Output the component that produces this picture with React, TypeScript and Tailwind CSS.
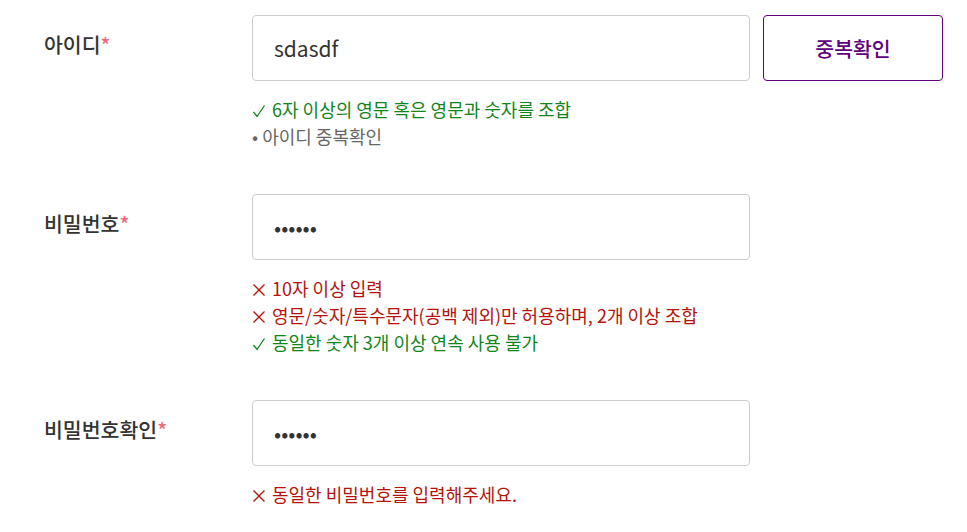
import type { JSX } from 'react'

type Hint = { ok: boolean | null; text: string }

const FONT = "font-['Noto_Sans_CJK_KR','Noto_Sans',sans-serif]"

function Cross(): JSX.Element {
  return (
    <svg width="14" height="14" viewBox="0 0 14 14" className="mr-[6px] inline-block align-[-1px]">
      <path d="M1.5 1.5 L12.5 12.5 M12.5 1.5 L1.5 12.5" stroke="currentColor" strokeWidth="1.3" fill="none" />
    </svg>
  )
}

function Check(): JSX.Element {
  return (
    <svg width="14" height="14" viewBox="0 0 14 14" className="mr-[6px] inline-block align-[-1px]">
      <path d="M1.5 8 L5 12.5 L12.5 1.5" stroke="currentColor" strokeWidth="1.3" fill="none" />
    </svg>
  )
}

function HintLine({ hint }: { hint: Hint }): JSX.Element {
  if (hint.ok === null) {
    return <p className="text-[#666]">• {hint.text}</p>
  }
  return (
    <p className={hint.ok ? 'text-[#0f851a]' : 'text-[#b3130b]'}>
      {hint.ok ? <Check /> : <Cross />}
      {hint.text}
    </p>
  )
}

function Row({
  label,
  value,
  type,
  hints,
  withButton,
}: {
  label: string
  value: string
  type: 'text' | 'password'
  hints: Hint[]
  withButton?: boolean
}): JSX.Element {
  return (
    <div className="flex">
      <label className="w-[208px] shrink-0 pt-[16px] text-[20.5px] leading-[26px] font-medium text-[#333]">
        {label}
        <span className="text-[#ee6a7b]">*</span>
      </label>
      <div className="flex flex-col">
        <div className="flex gap-[13px]">
          <input
            type={type}
            value={value}
            readOnly
            className="h-[66px] w-[498px] rounded-[4px] border border-[#ccc] bg-white px-[21px] text-[21px] text-[#333] outline-none"
          />
          {withButton && (
            <button className="h-[66px] w-[180px] rounded-[4px] border border-[#5f0080] bg-white text-[20.5px] font-medium text-[#5f0080]">
              중복확인
            </button>
          )}
        </div>
        <div className="mt-[15px] text-[18px] leading-[27px]">
          {hints.map((h) => (
            <HintLine key={h.text} hint={h} />
          ))}
        </div>
      </div>
    </div>
  )
}

export default function App(): JSX.Element {
  return (
    <div className={`${FONT} min-h-screen bg-white pl-[44px] pt-[15px]`}>
      <div className="flex flex-col gap-[44px]">
        <Row
          label="아이디"
          value="sdasdf"
          type="text"
          withButton
          hints={[
            { ok: true, text: '6자 이상의 영문 혹은 영문과 숫자를 조합' },
            { ok: null, text: '아이디 중복확인' },
          ]}
        />
        <Row
          label="비밀번호"
          value="123456"
          type="password"
          hints={[
            { ok: false, text: '10자 이상 입력' },
            { ok: false, text: '영문/숫자/특수문자(공백 제외)만 허용하며, 2개 이상 조합' },
            { ok: true, text: '동일한 숫자 3개 이상 연속 사용 불가' },
          ]}
        />
        <Row
          label="비밀번호확인"
          value="123456"
          type="password"
          hints={[{ ok: false, text: '동일한 비밀번호를 입력해주세요.' }]}
        />
      </div>
    </div>
  )
}
